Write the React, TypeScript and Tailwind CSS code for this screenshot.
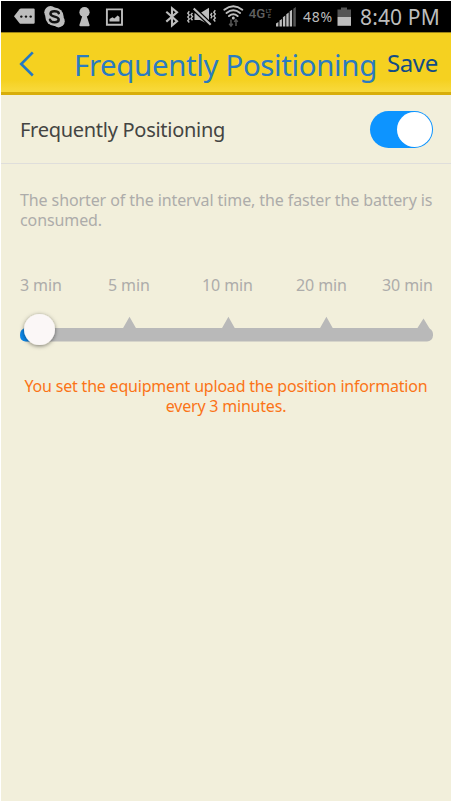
import { useState } from "react";

const MARKS = [
  { label: "3 min", gap: "w-[88px]" },
  { label: "5 min", gap: "w-[94px]" },
  { label: "10 min", gap: "w-[94px]" },
  { label: "20 min", gap: "w-[86px]" },
  { label: "30 min", gap: "w-[51px]" },
];

function StatusBar() {
  return (
    <div className="flex h-[31px] shrink-0 bg-black text-[#bdbdbd]">
      <svg width="299" height="31" viewBox="1 1 299 31" className="shrink-0" fill="#bdbdbd">
        <path d="M14 16.2 19.5 9.2Q20 8.6 21 8.6H33.5Q34.7 8.6 34.7 9.8V22.6Q34.7 23.8 33.5 23.8H21Q20 23.8 19.5 23.2Z" />
        <g fill="#111"><circle cx="21.3" cy="16.6" r="1.2" /><circle cx="26" cy="16.6" r="1.2" /><circle cx="30.7" cy="16.6" r="1.2" /></g>
        <circle cx="50.5" cy="12.3" r="6.2" />
        <circle cx="58.5" cy="21.2" r="6.2" />
        <circle cx="54.5" cy="16.7" r="9.2" />
        <path d="M58.8 13.2C58 11 51 10.3 50.5 13.6C50.3 17.5 58.8 15.8 58.7 19.6C58.4 23.3 50.8 22.8 50 19.7" fill="none" stroke="#111" strokeWidth="2.5" strokeLinecap="round" />
        <circle cx="84.5" cy="12.2" r="5.1" />
        <path d="M82.3 16H86.7L89.6 25Q89.7 26.3 88.4 26.3H80.6Q79.3 26.3 79.4 25Z" />
        <path d="M106.9 9.4H122V24.7H106.9Z" fill="none" stroke="#bdbdbd" strokeWidth="1.9" />
        <path d="M109.5 21.5V19L112.5 17.2 114.3 18.4 117.6 15.6 119.5 17V21.5Z" />
        <path d="M166.3 11.7 177 21.2 172 25.4V8.1L177 12.2 166.3 21.6" fill="none" stroke="#bdbdbd" strokeWidth="2.1" />
        <g fill="none" stroke="#bdbdbd" strokeWidth="1.4">
          <path d="M189.3 11.3 187.8 13.2 189.3 15.1 187.8 17 189.3 18.9 187.8 20.8 189.3 22.5M192.5 13 191 14.8 192.5 16.6 191 18.4 192.5 20.2M215.3 10.3 213.8 12.2 215.3 14.1 213.8 16 215.3 17.9 213.8 19.8 215.3 21.5M212 13 210.8 14.8 212 16.6 210.8 18.4" />
        </g>
        <path d="M194.5 13.3H200L209 7.7V24.5L200 20H194.5Z" />
        <path d="M193.7 8.5 210.7 24.8" stroke="#000" strokeWidth="4.6" />
        <path d="M193.7 8.5 210.7 24.8" stroke="#bdbdbd" strokeWidth="2.2" />
        <g fill="none" stroke="#bdbdbd" strokeWidth="2" strokeLinecap="round">
          <path d="M224.3 9.7Q233.3 2.9 242.3 9.7M226.5 13Q233.3 7.6 240.1 13M229 16Q233.3 12.5 237.6 16" />
        </g>
        <circle cx="233.3" cy="18" r="1.5" />
        <path d="M231 19.5V26M229.2 23.8 231 26 232.8 23.8M236 26V19.7M234.2 21.9 236 19.7 237.8 21.9" fill="none" stroke="#555" strokeWidth="1.5" />
        <text x="248.7" y="18" fill="#606060" fontSize="13" fontWeight="500" fontFamily="Roboto, sans-serif" textLength="16.5" lengthAdjust="spacingAndGlyphs">4G</text>
        <text x="265.8" y="12.6" fill="#555" fontSize="5.5" fontWeight="700" fontFamily="Roboto, sans-serif">LT</text>
        <text x="267.8" y="17.8" fill="#555" fontSize="5.5" fontWeight="700" fontFamily="Roboto, sans-serif">E</text>
        <path d="M276 23.5 278.4 22V26.5H276ZM279.5 20.5 281.9 19V26.5H279.5ZM282.9 17.3 285.3 15.5V26.5H282.9ZM286.3 14.3 288.7 12.5V26.5H286.3ZM289.7 11.3 292.1 9.7V26.5H289.7Z" />
        <path d="M293.3 8.8 295.8 7V26.5H293.3Z" fill="#555" />
      </svg>
      <div className="ml-[3px] w-[31px] shrink-0 whitespace-nowrap pt-px text-[14px] leading-[29px] tracking-[0.7px]">48%</div>
      <svg width="16" height="31" viewBox="336 1 16 31" className="ml-[2px] shrink-0">
        <path d="M341 7.5H347V9.5H351V17H337.5V9.5H341Z" fill="#555" />
        <path d="M337.5 17H351V25.8H337.5Z" fill="#bdbdbd" />
      </svg>
      <div className="ml-[8px] whitespace-nowrap pt-[2px] text-[21px] leading-[28px] tracking-[0.15px]">8:40 PM</div>
    </div>
  );
}

function Header() {
  return (
    <header className="flex h-[63px] shrink-0 items-center border-t border-b-[3px] border-t-[#9b8418] border-b-[#d8ae0b] bg-linear-to-b from-[#f5d120] from-80% to-[#f8da3c]">
      <button className="ml-[17px] pt-[2px]" aria-label="Back">
        <svg width="18" height="28" viewBox="0 0 18 28" fill="none" stroke="#2479c4" strokeWidth="2.6">
          <path d="M14.8 2.3 3.2 14 14.8 25.5" />
        </svg>
      </button>
      <h1 className="ml-[38px] w-[313px] shrink-0 whitespace-nowrap pt-[4px] text-[29.4px] leading-[40px] tracking-[-0.34px] text-[#2b7bc0]">Frequently Positioning</h1>
      <button className="whitespace-nowrap pt-px text-[24px] leading-[30px] tracking-[-0.4px] text-[#124c86]">Save</button>
    </header>
  );
}

export default function App() {
  const [on, setOn] = useState(true);
  return (
    <div className="flex h-[802px] w-[452px] flex-col overflow-hidden border border-white bg-[#f2efdb] font-['Noto_Sans',sans-serif]">
      <StatusBar />
      <Header />
      <section className="flex h-[69px] shrink-0 items-center justify-between border-b border-[#dfdedb] pr-[18px] pl-[19px]">
        <span className="whitespace-nowrap pt-[2px] text-[20px] leading-[28px] tracking-[-0.28px] text-[#444442]">Frequently Positioning</span>
        <button onClick={() => setOn(!on)} aria-label="Frequently Positioning" className={`flex h-[37px] w-[63px] items-center rounded-full px-px ${on ? "justify-end bg-[#0d94ff]" : "justify-start bg-[#b9b9b9]"}`}>
          <span className="size-[35px] rounded-full bg-white" />
        </button>
      </section>
      <p className="mt-[27px] ml-[19px] whitespace-nowrap text-[16px] leading-[19.5px] tracking-[-0.1px] text-[#adacaa]">
        The shorter of the interval time, the faster the battery is
        <br />
        consumed.
      </p>
      <div className="mt-[45px] ml-[19px] flex text-[16px] leading-[20px] tracking-[-0.1px] text-[#adacaa]">
        {MARKS.map((m) => (
          <span key={m.label} className={`${m.gap} shrink-0 whitespace-nowrap`}>{m.label}</span>
        ))}
      </div>
      <svg width="450" height="50" viewBox="1 305 450 50" className="mt-[10px] shrink-0">
        <defs>
          <filter id="knob" x="-50%" y="-50%" width="200%" height="200%">
            <feDropShadow dx="0" dy="1" stdDeviation="2.2" floodColor="#000" floodOpacity="0.5" />
          </filter>
        </defs>
        <rect x="20" y="328" width="413" height="13.5" rx="6" fill="#b9b9b9" />
        <path d="M40 328H26Q20 329 20 335Q20 341 26 341.5H40Z" fill="#0c87e8" />
        <path d="M122.8 328.5 129.5 316.7 136.2 328.5ZM221.8 328.5 228.4 316.7 235 328.5ZM319.8 328.5 326.4 316.7 333 328.5ZM416.5 329.5 423.5 318.5 430.5 330Z" fill="#b9b9b9" />
        <circle cx="39.5" cy="329.5" r="15.5" fill="#fbf7f7" filter="url(#knob)" />
      </svg>
      <p className="mt-[22px] text-center text-[16px] leading-[19.5px] tracking-[-0.2px] text-[#fb7417]">
        <span className="whitespace-nowrap">You set the equipment upload the position information</span>
        <br />
        every 3 minutes.
      </p>
    </div>
  );
}
